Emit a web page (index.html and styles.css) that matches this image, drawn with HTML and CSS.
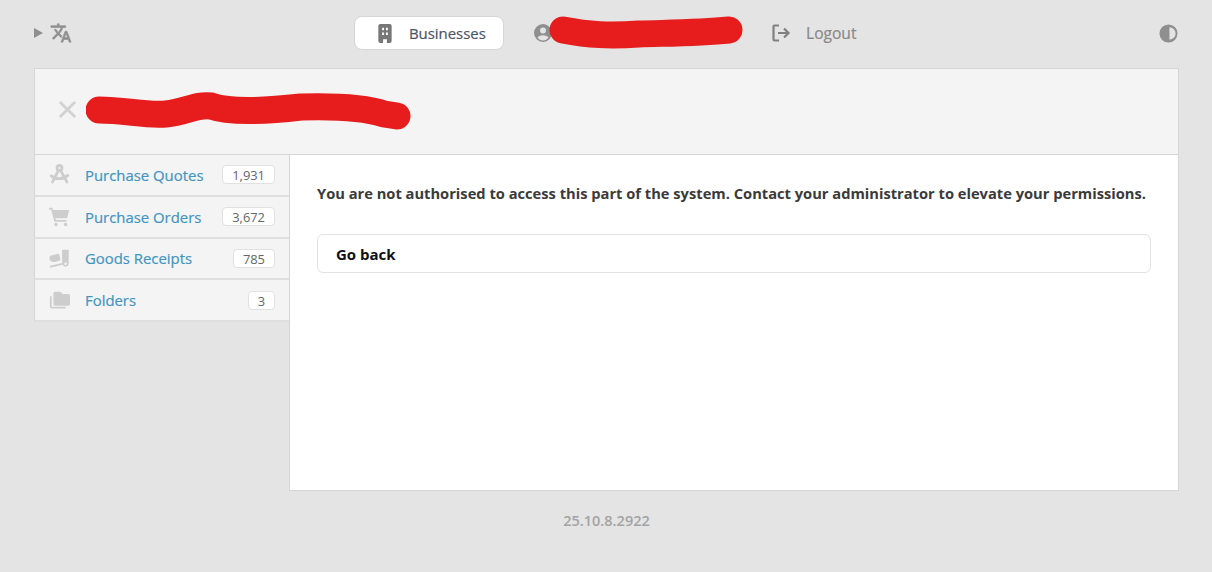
FILE: index.html
```html
<!DOCTYPE html>
<html lang="en">
<head>
  <meta charset="UTF-8">
  <title>Businesses</title>
  <link rel="stylesheet" href="styles.css">
</head>
<body>

  <div class="topbar">
    <div class="top-left">
      <span class="caret"></span>
      <svg class="lang-icon" viewBox="0 0 24 24"><path d="M12.870 15.070l-2.540-2.510.03-.03A17.500 17.500 0 0 0 14.070 6H17V4h-7V2H8v2H1v2h11.170A15.700 15.700 0 0 1 9 11.350 15.600 15.600 0 0 1 6.690 8h-2c.73 1.630 1.730 3.170 2.980 4.560l-5.090 5.020L4 19l5-5 3.110 3.110.76-2.040zM18.500 10h-2L12 22h2l1.120-3h4.750L21 22h2l-4.500-12zm-2.620 7l1.620-4.330L19.120 17h-3.240z"/></svg>
    </div>
    <div class="top-middle">
      <a class="biz-btn">
        <svg class="biz-icon" viewBox="0 0 14 20"><path fill-rule="evenodd" d="M2 0h10a2 2 0 0 1 2 2v16a2 2 0 0 1-2 2H9v-4H5v4H2a2 2 0 0 1-2-2V2a2 2 0 0 1 2-2zm2 4v2.500h2V4zm4 0v2.500h2V4zM4 9v2.500h2V9zm4 0v2.500h2V9z"/></svg>
        <span>Businesses</span>
      </a>
      <div class="user">
        <svg class="user-icon" viewBox="0 0 20 20"><path fill-rule="evenodd" d="M10 1a9 9 0 1 1 0 18 9 9 0 0 1 0-18zm0 3.500a3 3 0 1 0 0 6 3 3 0 0 0 0-6zM4.500 14.800A6.800 6.800 0 0 0 10 17.500a6.800 6.800 0 0 0 5.500-2.700c-.6-1.500-3-2.500-5.500-2.500s-4.900 1-5.500 2.500z"/></svg>
        <svg class="scribble-user" viewBox="0 0 194 34"><path d="M14 14 C40 19 60 20 90 18 C120 17 150 17 180 14"/></svg>
      </div>
      <a class="logout">
        <svg class="logout-icon" viewBox="0 0 20 20"><path d="M8 2.500H3.500a1 1 0 0 0-1 1v13a1 1 0 0 0 1 1H8M7 10h10.500M13 5.500l4.500 4.500-4.500 4.500"/></svg>
        <span>Logout</span>
      </a>
    </div>
    <svg class="theme-icon" viewBox="0 0 20 20"><path fill-rule="evenodd" d="M10 .5a9.500 9.500 0 1 1 0 19 9.500 9.500 0 0 1 0-19zm1 3v13a6.500 6.500 0 0 0 0-13z"/></svg>
  </div>

  <div class="panel">
    <div class="panel-head">
      <svg class="close-icon" viewBox="0 0 20 20"><path d="M2 2l16 16M18 2L2 18"/></svg>
      <svg class="scribble-title" viewBox="0 0 326 42"><path d="M13 21 C40 21 60 27 80 25 C100 23 110 15 125 17 C145 24 180 22 215 18 C250 17 280 19 298 25 L311 27"/></svg>
    </div>
    <div class="panel-body">
      <div class="sidebar">
        <a class="nav-item">
          <svg class="nav-icon compass" viewBox="0 0 24 24"><circle cx="12" cy="4.500" r="2.800"/><path d="M10.700 7.500L4 20.500M13.300 7.500L20.500 20.500M2.500 13.500C8 18 16 18 21.500 13"/></svg>
          <span class="nav-label">Purchase Quotes</span>
          <span class="badge">1,931</span>
        </a>
        <a class="nav-item">
          <svg class="nav-icon" viewBox="0 0 24 24"><path d="M0 2h3.800l.8 2.500H23l-2.300 9.500H7.300l.5 2H20v2H6.200L2.400 4H0zM8 19a2 2 0 1 1 0 4 2 2 0 0 1 0-4zm11 0a2 2 0 1 1 0 4 2 2 0 0 1 0-4z"/></svg>
          <span class="nav-label">Purchase Orders</span>
          <span class="badge">3,672</span>
        </a>
        <a class="nav-item">
          <svg class="nav-icon" viewBox="0 0 24 24"><path fill-rule="evenodd" d="M15 2h7.500v16a3.500 3.500 0 0 1-6.700 1.200L1 22.500v-2.300l14-3zM3.500 8.500l6.500-2c1 0 1.500.5 1.800 1.500l1.200 4.500c.2 1-.2 1.700-1 2l-5.500 1.500c-3.500.5-6-1.500-6-4.200 0-1.700 1-3 3-3.800zM19 16.500a1.500 1.500 0 1 0 0 3 1.500 1.500 0 0 0 0-3z"/></svg>
          <span class="nav-label">Goods Receipts</span>
          <span class="badge">785</span>
        </a>
        <a class="nav-item">
          <svg class="nav-icon" viewBox="0 0 24 24"><path d="M7 2h6l2.500 2.500H22a2 2 0 0 1 2 2V16a2 2 0 0 1-2 2H7a2 2 0 0 1-2-2V4a2 2 0 0 1 2-2zM1 7h2v12h16v2H3a2 2 0 0 1-2-2z"/></svg>
          <span class="nav-label">Folders</span>
          <span class="badge">3</span>
        </a>
      </div>
      <div class="content">
        <p class="message">You are not authorised to access this part of the system. Contact your administrator to elevate your permissions.</p>
        <a class="back-btn">Go back</a>
      </div>
    </div>
  </div>

  <div class="version">25.10.8.2922</div>

</body>
</html>
```

FILE: styles.css
```css
* {
  margin: 0;
  padding: 0;
  box-sizing: border-box;
}

body {
  font-family: "Open Sans", "Noto Sans", sans-serif;
  background-color: #e4e4e4;
  color: #333;
  height: 572px;
  overflow: hidden;
  padding: 0 33px 0 34px;
}

.topbar {
  height: 68px;
  display: flex;
  align-items: center;
  padding-bottom: 2px;
}

.top-left {
  display: flex;
  align-items: center;
  gap: 7px;
  width: 320px;
}

.caret {
  width: 0;
  height: 0;
  border-left: 9px solid #8f8f8f;
  border-top: 5px solid transparent;
  border-bottom: 5px solid transparent;
}

.lang-icon {
  width: 22px;
  height: 22px;
  fill: #8f8f8f;
  stroke: #8f8f8f;
  stroke-width: 0.7px;
}

.top-middle {
  display: flex;
  align-items: center;
  flex: 1;
}

.biz-btn {
  width: 150px;
  height: 34px;
  display: flex;
  align-items: center;
  background-color: #fff;
  border: 1px solid #d6d6d6;
  border-radius: 8px;
  padding-left: 23px;
  font-size: 14.900px;
  -webkit-text-stroke: 0.2px;
  color: #4a5568;
}

.biz-icon {
  width: 14px;
  height: 19px;
  fill: #777;
  margin-right: 17px;
}

.user {
  display: flex;
  align-items: center;
  margin-left: 29px;
  width: 238px;
}

.user-icon {
  width: 20px;
  height: 20px;
  fill: #8f8f8f;
  flex: none;
}

.scribble-user {
  width: 194px;
  height: 34px;
  margin-left: -4px;
  fill: none;
  stroke: #e71d1d;
  stroke-width: 27px;
  stroke-linecap: round;
  stroke-linejoin: round;
}

.logout {
  display: flex;
  align-items: center;
  font-size: 15.600px;
  -webkit-text-stroke: 0.2px;
  color: #888;
  gap: 15px;
}

.logout-icon {
  width: 20px;
  height: 20px;
  fill: none;
  stroke: #808080;
  stroke-width: 2.200px;
}

.theme-icon {
  width: 19px;
  height: 19px;
  fill: #8f8f8f;
  margin-right: 1px;
}

.panel {
  height: 423px;
  display: flex;
  flex-direction: column;
}

.panel-head {
  height: 87px;
  background-color: #f4f4f4;
  border: 1px solid #d6d6d6;
  display: flex;
  align-items: center;
  padding-left: 23px;
}

.close-icon {
  width: 19px;
  height: 19px;
  margin-bottom: 5px;
  fill: none;
  stroke: #d2d2d2;
  stroke-width: 3px;
}

.scribble-title {
  width: 326px;
  height: 42px;
  margin-left: 9px;
  margin-bottom: 4px;
  fill: none;
  stroke: #e71d1d;
  stroke-width: 27px;
  stroke-linecap: round;
  stroke-linejoin: round;
}

.panel-body {
  flex: 1;
  display: flex;
  min-height: 0;
}

.sidebar {
  width: 255px;
  flex: none;
}

.nav-item {
  height: 41.750px;
  display: flex;
  align-items: center;
  background-color: #f4f4f4;
  border-left: 1px solid #d6d6d6;
  border-bottom: 2px solid #dfdfdf;
  padding: 0 14px;
}

.nav-icon {
  width: 21px;
  height: 21px;
  fill: #cdcdcd;
  flex: none;
  margin-right: 15px;
}

.compass {
  fill: none;
  stroke: #cdcdcd;
  stroke-width: 3.200px;
  stroke-linecap: round;
}

.nav-label {
  flex: 1;
  font-size: 14.900px;
  -webkit-text-stroke: 0.2px;
  color: #4394bf;
}

.badge {
  min-width: 22px;
  height: 19px;
  line-height: 18px;
  padding: 0 9px;
  background-color: #fff;
  border: 1px solid #e1e1e1;
  border-radius: 4px;
  font-size: 12.900px;
  color: #666;
  text-align: center;
}

.content {
  flex: 1;
  background-color: #fff;
  border: 1px solid #d6d6d6;
  border-top: none;
  padding: 28px 27px;
}

.message {
  font-size: 14.680px;
  font-weight: 700;
  line-height: 20px;
  color: #3a3a3a;
  margin-bottom: 31px;
}

.back-btn {
  display: block;
  height: 39px;
  line-height: 38px;
  border: 1px solid #e3e3e3;
  border-radius: 6px;
  padding-left: 18px;
  font-size: 15px;
  font-weight: 700;
  color: #111;
}

.version {
  margin-top: 20px;
  text-align: center;
  font-size: 14.500px;
  font-weight: 600;
  color: #a3a3a3;
}
```
